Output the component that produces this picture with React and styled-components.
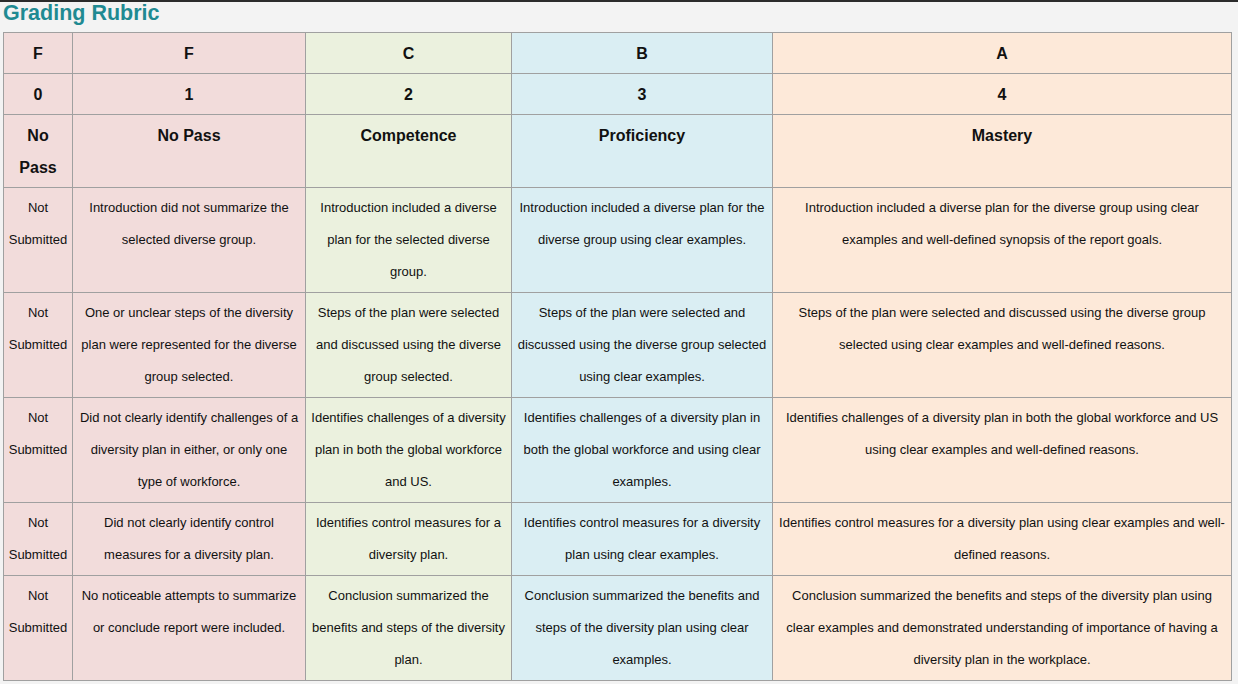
import React from "react";
import styled, { createGlobalStyle } from "styled-components";

const Global = createGlobalStyle`
  html, body { margin: 0; padding: 0; }
  body {
    background: #f3f3f3;
    font-family: "Liberation Sans", Arial, sans-serif;
    color: #000;
  }
`;

const Page = styled.div`
  border-top: 2px solid #2b2b2b;
  padding: 0 0 0 3px;
  min-height: 682px;
  box-sizing: border-box;
`;

const Title = styled.h2`
  margin: 0;
  font-size: 21.5px;
  line-height: 22px;
  font-weight: bold;
  color: #1f8a92;
`;

const Table = styled.table`
  margin-top: 8px;
  border-collapse: collapse;
  table-layout: fixed;
  width: 1228px;
  border: 1px solid #a0a0a0;
`;

const palette = {
  f: "#f2dcdb",
  c: "#ebf1de",
  b: "#daeef3",
  a: "#fde9d9",
};

const Cell = styled.td`
  border: 1px solid #a0a0a0;
  background: ${(p) => palette[p.$tone]};
  text-align: center;
  vertical-align: top;
  padding: ${(p) => (p.$head ? "5px 4px 3px" : "4px")};
  line-height: 32px;
  font-size: ${(p) => (p.$head ? "16px" : "13px")};
  font-weight: ${(p) => (p.$head ? "bold" : "normal")};
  color: #111;
`;

const cols = [
  { w: 69, tone: "f" },
  { w: 233, tone: "f" },
  { w: 206, tone: "c" },
  { w: 261, tone: "b" },
  { w: 459, tone: "a" },
];

const headRows = [
  ["F", "F", "C", "B", "A"],
  ["0", "1", "2", "3", "4"],
  ["No Pass", "No Pass", "Competence", "Proficiency", "Mastery"],
];

const bodyRows = [
  [
    "Not Submitted",
    "Introduction did not summarize the selected diverse group.",
    "Introduction included a diverse plan for the selected diverse group.",
    "Introduction included a diverse plan for the diverse group using clear examples.",
    "Introduction included a diverse plan for the diverse group using clear examples and well-defined synopsis of the report goals.",
  ],
  [
    "Not Submitted",
    "One or unclear steps of the diversity plan were represented for the diverse group selected.",
    "Steps of the plan were selected and discussed using the diverse group selected.",
    "Steps of the plan were selected and discussed using the diverse group selected using clear examples.",
    "Steps of the plan were selected and discussed using the diverse group selected using clear examples and well-defined reasons.",
  ],
  [
    "Not Submitted",
    "Did not clearly identify challenges of a diversity plan in either, or only one type of workforce.",
    "Identifies challenges of a diversity plan in both the global workforce and US.",
    "Identifies challenges of a diversity plan in both the global workforce and using clear examples.",
    "Identifies challenges of a diversity plan in both the global workforce and US using clear examples and well-defined reasons.",
  ],
  [
    "Not Submitted",
    "Did not clearly identify control measures for a diversity plan.",
    "Identifies control measures for a diversity plan.",
    "Identifies control measures for a diversity plan using clear examples.",
    "Identifies control measures for a diversity plan using clear examples and well-defined reasons.",
  ],
  [
    "Not Submitted",
    "No noticeable attempts to summarize or conclude report were included.",
    "Conclusion summarized the benefits and steps of the diversity plan.",
    "Conclusion summarized the benefits and steps of the diversity plan using clear examples.",
    "Conclusion summarized the benefits and steps of the diversity plan using clear examples and demonstrated understanding of importance of having a diversity plan in the workplace.",
  ],
];

export default function App() {
  return (
    <>
      <Global />
      <Page>
        <Title>Grading Rubric</Title>
        <Table>
          <colgroup>
            {cols.map((c, i) => (
              <col key={i} style={{ width: c.w }} />
            ))}
          </colgroup>
          <thead>
            {headRows.map((row, r) => (
              <tr key={r}>
                {row.map((t, i) => (
                  <Cell as="th" key={i} $head $tone={cols[i].tone}>
                    {t}
                  </Cell>
                ))}
              </tr>
            ))}
          </thead>
          <tbody>
            {bodyRows.map((row, r) => (
              <tr key={r}>
                {row.map((t, i) => (
                  <Cell key={i} $tone={cols[i].tone}>
                    {t}
                  </Cell>
                ))}
              </tr>
            ))}
          </tbody>
        </Table>
      </Page>
    </>
  );
}
